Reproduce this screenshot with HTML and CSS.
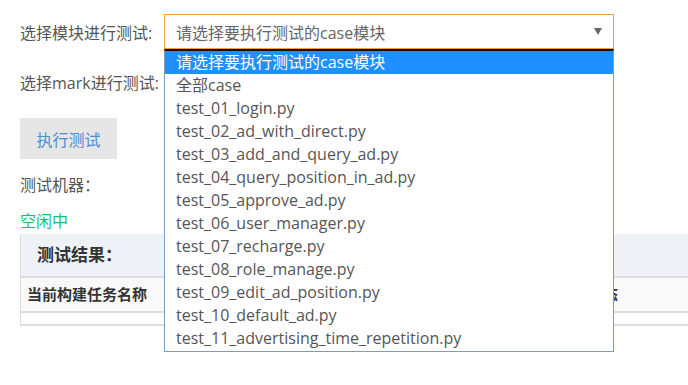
FILE: index.html
```html
<!DOCTYPE html>
<html lang="zh-CN">
<head>
    <meta charset="UTF-8">
    <title>执行测试</title>
    <link rel="stylesheet" href="styles.css">
</head>
<body>
    <div class="container">
        <div class="form-row first">
            <label class="label">选择模块进行测试:</label>
            <div class="select-wrap">
                <div class="select open">
                    <span>请选择要执行测试的case模块</span>
                    <span class="arrow"></span>
                </div>
                <div class="dropdown">
                    <div class="option active">请选择要执行测试的case模块</div>
                    <div class="option">全部case</div>
                    <div class="option">test_01_login.py</div>
                    <div class="option">test_02_ad_with_direct.py</div>
                    <div class="option">test_03_add_and_query_ad.py</div>
                    <div class="option">test_04_query_position_in_ad.py</div>
                    <div class="option">test_05_approve_ad.py</div>
                    <div class="option">test_06_user_manager.py</div>
                    <div class="option">test_07_recharge.py</div>
                    <div class="option">test_08_role_manage.py</div>
                    <div class="option">test_09_edit_ad_position.py</div>
                    <div class="option">test_10_default_ad.py</div>
                    <div class="option">test_11_advertising_time_repetition.py</div>
                </div>
            </div>
        </div>

        <div class="form-row second">
            <label class="label">选择mark进行测试:</label>
            <div class="select mark"></div>
        </div>

        <button type="button" class="btn">执行测试</button>

        <div class="machine">测试机器：</div>
        <div class="status">空闲中</div>

        <div class="panel">
            <div class="panel-head">测试结果：</div>
            <div class="table-head">
                <div class="th">当前构建任务名称</div>
                <div class="th right">执行状态</div>
            </div>
            <div class="table-row"></div>
        </div>
    </div>
</body>
</html>
```

FILE: styles.css
```css
body{
    margin: 0;
    font-family: "Open Sans", "Noto Sans CJK SC", sans-serif;
    color: #555;
    font-size: 16px;
}

.container{
    padding: 14px 0 0 20px;
    min-height: 360px;
}

.form-row{
    display: flex;
    align-items: center;
}

.form-row.second{
    margin-top: 14px;
}

.label{
    width: 144px;
    color: #555;
    white-space: nowrap;
}

.select-wrap{
    position: relative;
}

.select{
    box-sizing: border-box;
    width: 450px;
    height: 35px;
    border: 1px solid #ccc;
    display: flex;
    align-items: center;
    justify-content: space-between;
    padding: 0 11px 0 11px;
    color: #666;
}

.select.open{
    border-color: #f0a040;
}

.select.mark{
    height: 37px;
}

.arrow{
    width: 0;
    height: 0;
    border-left: 4px solid transparent;
    border-right: 4px solid transparent;
    border-top: 7px solid #666;
}

.dropdown{
    position: absolute;
    top: 35px;
    left: 0;
    width: 450px;
    box-sizing: border-box;
    padding-bottom: 1px;
    background: #fff;
    border: 1px solid #7f9db9;
    border-top: 2px solid #111;
    z-index: 10;
}

.option{
    height: 23px;
    line-height: 23px;
    padding-left: 11px;
    color: #555;
    white-space: nowrap;
}

.option.active{
    background: #1e90ff;
    color: #fff;
}

.btn{
    display: block;
    margin-top: 18px;
    width: 97px;
    height: 41px;
    border: none;
    background: #e6e6e6;
    color: #4a8fd6;
    font-family: inherit;
    font-size: 16px;
}

.machine{
    margin-top: 15px;
    line-height: 22px;
    color: #555;
}

.status{
    margin-top: 14px;
    line-height: 22px;
    color: #1cbd6c;
}

.panel{
    margin-top: 2px;
    border-left: 1px solid #ddd;
}

.panel-head{
    background: #eef1f6;
    height: 42px;
    line-height: 42px;
    padding-left: 16px;
    font-size: 17px;
    font-weight: bold;
    color: #333;
    border-bottom: 2px solid #ddd;
}

.table-head{
    display: flex;
    justify-content: space-between;
    background: #f9f9f9;
    height: 33px;
    line-height: 33px;
    border-bottom: 2px solid #ddd;
}

.th{
    padding-left: 6px;
    font-size: 15px;
    font-weight: bold;
    color: #333;
}

.th.right{
    padding: 0 70px 0 0;
    margin-left: auto;
}

.table-row{
    height: 11px;
    border-bottom: 2px solid #ddd;
}
```
